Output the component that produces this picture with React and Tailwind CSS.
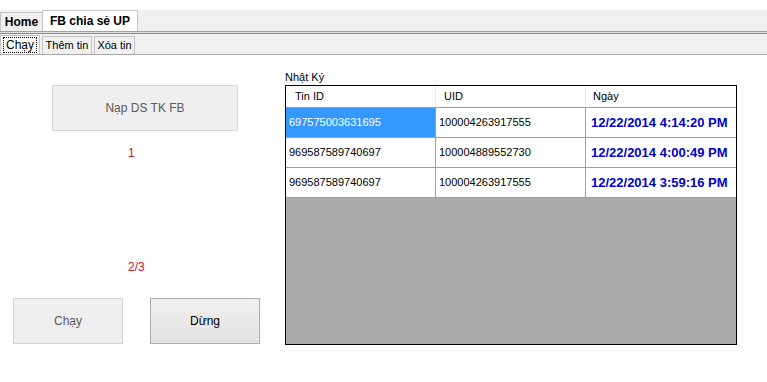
const rows = [
  { tin: '697575003631695', uid: '100004263917555', ngay: '12/22/2014 4:14:20 PM', selected: true },
  { tin: '969587589740697', uid: '100004889552730', ngay: '12/22/2014 4:00:49 PM' },
  { tin: '969587589740697', uid: '100004263917555', ngay: '12/22/2014 3:59:16 PM' },
];

export default function App() {
  return (
    <div className="w-[767px] h-[382px] bg-white text-[11px] text-black overflow-hidden" style={{ fontFamily: '"Liberation Sans", Arial, sans-serif' }}>
      {/* outer tabs */}
      <div className="h-[10px]" />
      <div className="flex h-[21px] bg-[#f0f0f0] items-end">
        <div className="h-[19px] w-[43px] border border-b-0 border-[#c4c4c4] bg-[#f0f0f0] flex items-center justify-center font-bold text-[12px]">Home</div>
        <div className="h-[21px] w-[96px] border border-b-0 border-[#c4c4c4] bg-white flex items-center justify-center font-bold text-[12px] -ml-px">FB chia sẻ UP</div>
      </div>
      <div className="h-[1px] bg-[#a0a0a0]" />
      <div className="h-[1px] bg-[#e0e0e0]" />
      <div className="h-[1px] bg-[#8a8a8a]" />
      {/* inner tabs */}
      <div className="flex h-[21px] bg-[#f0f0f0] items-end gap-[2px] border-b border-[#a8a8a8]">
        <div className="h-[19px] w-[40px] bg-white border border-b-0 border-[#c4c4c4] flex items-center px-[2px]">
          <span className="border border-dotted border-black px-[2px] leading-[14px] text-[12px]">Chạy</span>
        </div>
        <div className="h-[18px] w-[50px] border border-b-0 border-[#c4c4c4] bg-[#f0f0f0] flex items-center justify-center text-[11px]">Thêm tin</div>
        <div className="h-[18px] w-[41px] border border-b-0 border-[#c4c4c4] bg-[#f0f0f0] flex items-center justify-center text-[11px]">Xóa tin</div>
      </div>

      <div className="flex">
        {/* left panel */}
        <div className="w-[285px] flex flex-col">
          <div className="ml-[52px] mt-[30px] w-[186px] h-[46px] bg-[#efefef] border border-[#d4d4d4] flex items-center justify-center text-[#5a5a5a] text-[12px]">Nạp DS TK FB</div>
          <div className="ml-[128px] mt-[15px] text-[#c8102e] leading-[14px] text-[12px]">1</div>
          <div className="ml-[128px] mt-[100px] text-[#c8102e] leading-[14px] text-[12px]">2/3</div>
          <div className="flex mt-[24px] ml-[13px] gap-[27px]">
            <div className="w-[110px] h-[46px] bg-[#efefef] border border-[#d4d4d4] flex items-center justify-center text-[#5a5a5a] text-[12px]">Chạy</div>
            <div className="w-[110px] h-[46px] bg-gradient-to-b from-[#f0f0f0] to-[#e2e2e2] border border-[#adadad] flex items-center justify-center text-[12px]">Dừng</div>
          </div>
        </div>

        {/* log */}
        <div className="flex flex-col">
          <div className="mt-[14px] h-[16px] leading-[16px] text-[11px]">Nhật Ký</div>
          <div className="w-[452px] h-[260px] border border-black bg-[#ababab] flex flex-col">
            <div className="flex h-[22px] bg-white border-b border-[#a0a0a0]">
              <div className="w-[150px] border-r border-[#e8e8e8] pl-[9px] flex items-center">Tin ID</div>
              <div className="w-[150px] border-r border-[#e8e8e8] pl-[8px] flex items-center">UID</div>
              <div className="flex-1 pl-[7px] flex items-center">Ngày</div>
            </div>
            {rows.map((r, i) => (
              <div key={i} className="flex h-[30px] bg-white border-b border-[#a0a0a0]">
                <div className={`w-[150px] border-r border-[#a0a0a0] pl-[3px] flex items-center ${r.selected ? 'bg-[#3399ff] text-white' : ''}`}>{r.tin}</div>
                <div className="w-[150px] border-r border-[#a0a0a0] pl-[3px] flex items-center">{r.uid}</div>
                <div className="flex-1 pl-[5px] flex items-center font-bold text-[#0000cc] text-[13px]">{r.ngay}</div>
              </div>
            ))}
          </div>
        </div>
      </div>
    </div>
  );
}
